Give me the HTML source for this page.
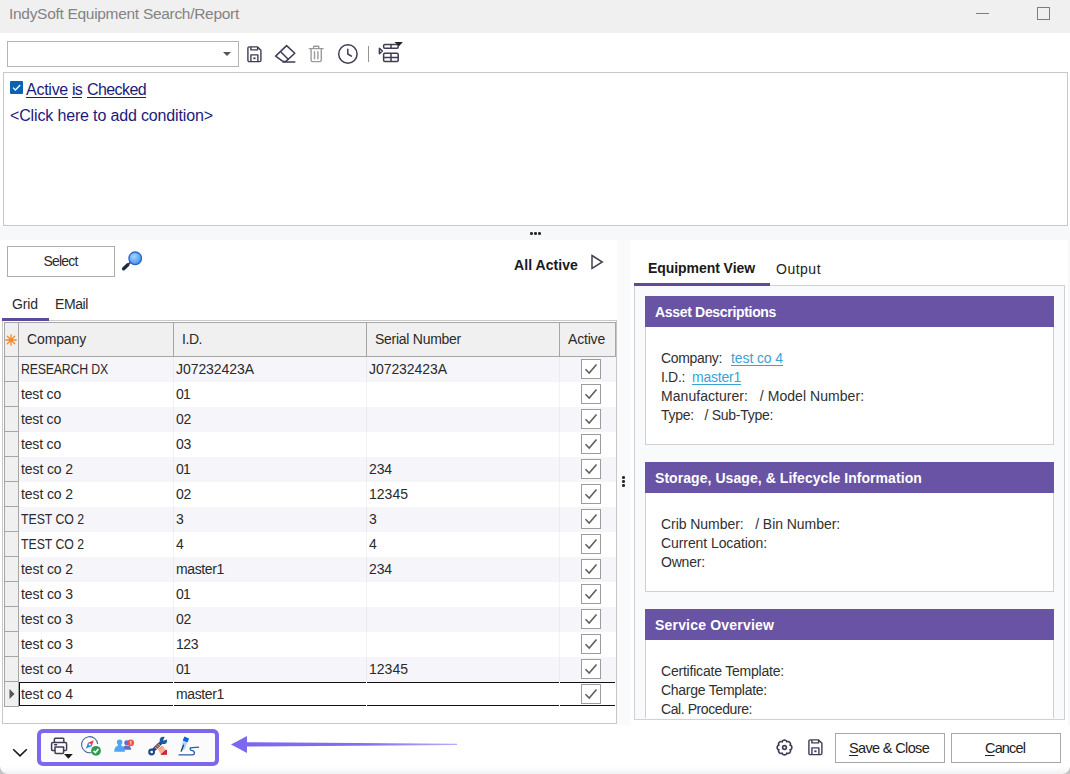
<!DOCTYPE html>
<html>
<head>
<meta charset="utf-8">
<title>IndySoft Equipment Search/Report</title>
<style>
*{box-sizing:border-box;margin:0;padding:0}
html,body{width:1070px;height:774px;overflow:hidden;background:#fff}
body{font-family:"Liberation Sans",sans-serif;font-size:14px;color:#222;position:relative}
.abs{position:absolute}
.t{position:absolute;white-space:pre}
u{text-decoration:underline;text-underline-offset:2px}
svg{position:absolute;overflow:visible}

</style>
</head>
<body>
<div class="abs" style="left:0px;top:0px;width:1070px;height:33px;background:#f0f0f0;"></div>
<div class="t" style="left:9px;top:4px;height:20px;line-height:20px;font-size:15.5px;color:#838383;letter-spacing:-0.30px;">IndySoft Equipment Search/Report</div>
<div class="abs" style="left:976px;top:13.4px;width:13px;height:1px;background:#7d7d7d;"></div>
<div class="abs" style="left:1037px;top:7px;width:13px;height:13px;border:1px solid #7d7d7d;"></div>
<div class="abs" style="left:7px;top:41px;width:232px;height:26px;background:#fff;border:1px solid #b4b4b4;"></div>
<div class="abs" style="left:223px;top:52px;width:0;height:0;border-left:4px solid transparent;border-right:4px solid transparent;border-top:4px solid #555"></div>
<div class="abs" style="left:3px;top:72px;width:1065px;height:154px;background:#fff;border:1px solid #c8c8c8;"></div>
<div class="abs" style="left:0px;top:226px;width:1070px;height:14px;background:#f7f8fa;"></div>
<div class="abs" style="left:617px;top:240px;width:13px;height:485px;background:#f9fafb;"></div>
<div class="abs" style="left:1068px;top:240px;width:2px;height:485px;background:#f7f8fa;"></div>
<div class="abs" style="left:530.2px;top:232.29999999999998px;width:2.6px;height:2.6px;background:#2a2a2a;border-radius:50%;"></div>
<div class="abs" style="left:534.2px;top:232.29999999999998px;width:2.6px;height:2.6px;background:#2a2a2a;border-radius:50%;"></div>
<div class="abs" style="left:538.1px;top:232.29999999999998px;width:2.6px;height:2.6px;background:#2a2a2a;border-radius:50%;"></div>
<div class="abs" style="left:622.1px;top:476.2px;width:2.6px;height:2.6px;background:#2a2a2a;border-radius:50%;"></div>
<div class="abs" style="left:622.1px;top:480.09999999999997px;width:2.6px;height:2.6px;background:#2a2a2a;border-radius:50%;"></div>
<div class="abs" style="left:622.1px;top:484.0px;width:2.6px;height:2.6px;background:#2a2a2a;border-radius:50%;"></div>
<div class="abs" style="left:9.5px;top:81px;width:13px;height:13px;background:#0a62b0;border-radius:1px;"></div>
<svg style="left:9.5px;top:81px" width="13" height="13" viewBox="0 0 13 13"><path d="M3 6.6 L5.4 9 L10.2 4" fill="none" stroke="#fff" stroke-width="1.3"/></svg>
<div class="t" style="left:26px;top:80px;height:20px;line-height:20px;font-size:16px;color:#1b1b78;letter-spacing:-0.26px;text-decoration:underline;text-underline-offset:2px;">Active</div>
<div class="t" style="left:72px;top:80px;height:20px;line-height:20px;font-size:16px;color:#1b1b78;letter-spacing:-0.78px;text-decoration:underline;text-underline-offset:2px;">is</div>
<div class="t" style="left:87px;top:80px;height:20px;line-height:20px;font-size:16px;color:#1b1b78;letter-spacing:-0.59px;text-decoration:underline;text-underline-offset:2px;">Checked</div>
<div class="t" style="left:10px;top:106px;height:20px;line-height:20px;font-size:16px;color:#1b1b78;letter-spacing:-0.15px;">&lt;Click here to add condition&gt;</div>
<div class="abs" style="left:7px;top:246px;width:108px;height:31px;background:#fff;border:1px solid #adadad;"></div>
<div class="t" style="left:43.5px;top:251px;height:20px;line-height:20px;font-size:14px;color:#2a2a2a;letter-spacing:-0.82px;">Select</div>
<div class="t" style="left:514px;top:255px;height:20px;line-height:20px;font-size:14px;color:#1a1a1a;font-weight:bold;letter-spacing:0.07px;">All Active</div>
<svg style="left:590px;top:254px" width="14" height="16" viewBox="0 0 14 16"><path d="M2 1.5 L12.3 8 L2 14.5 Z" fill="none" stroke="#44444f" stroke-width="1.5" stroke-linejoin="miter"/></svg>
<div class="t" style="left:12px;top:294px;height:20px;line-height:20px;font-size:14px;color:#2a2a2a;letter-spacing:-0.11px;">Grid</div>
<div class="t" style="left:55px;top:294px;height:20px;line-height:20px;font-size:14px;color:#2a2a2a;letter-spacing:-0.40px;">EMail</div>
<div class="abs" style="left:2px;top:318px;width:47px;height:3px;background:#5d4a9e;z-index:2;"></div>
<div class="abs" style="left:2px;top:320px;width:615px;height:404px;background:#fff;border:1px solid #c8c8c8;"></div>
<div class="abs" style="left:4px;top:322px;width:612px;height:35px;background:#f0f0f0;border:1px solid #a6a6a6;border-left:none;"></div>
<div class="abs" style="left:18px;top:322px;width:1px;height:35px;background:#a6a6a6;"></div>
<div class="abs" style="left:173px;top:322px;width:1px;height:35px;background:#a6a6a6;"></div>
<div class="abs" style="left:366px;top:322px;width:1px;height:35px;background:#a6a6a6;"></div>
<div class="abs" style="left:559px;top:322px;width:1px;height:35px;background:#a6a6a6;"></div>
<svg style="left:5px;top:334px" width="12" height="12" viewBox="0 0 12 12"><g stroke="#ee8a2a" stroke-width="1.3" stroke-linecap="round"><path d="M6 0.8 V11.2 M0.8 6 H11.2 M2.3 2.3 L9.7 9.7 M9.7 2.3 L2.3 9.7"/></g><circle cx="6" cy="6" r="1.6" fill="#ee8a2a"/></svg>
<div class="t" style="left:27px;top:329px;height:20px;line-height:20px;font-size:14px;color:#2a2a2a;letter-spacing:-0.13px;">Company</div>
<div class="t" style="left:182px;top:329px;height:20px;line-height:20px;font-size:14px;color:#2a2a2a;letter-spacing:-0.44px;">I.D.</div>
<div class="t" style="left:375px;top:329px;height:20px;line-height:20px;font-size:14px;color:#2a2a2a;letter-spacing:-0.27px;">Serial Number</div>
<div class="t" style="left:568px;top:329px;height:20px;line-height:20px;font-size:14px;color:#2a2a2a;letter-spacing:-0.19px;">Active</div>
<div class="abs" style="left:19px;top:357px;width:597px;height:25px;background:#f6f6fa;"></div>
<div class="abs" style="left:4px;top:357px;width:15px;height:25px;background:#f0f0f0;border-right:1px solid #a6a6a6;border-bottom:1px solid #a6a6a6;"></div>
<div class="t" style="left:21px;top:359px;height:20px;line-height:20px;font-size:14px;color:#2a2a2a;letter-spacing:-0.21px;transform:scaleX(0.88);transform-origin:0 50%;">RESEARCH DX</div>
<div class="t" style="left:176px;top:359px;height:20px;line-height:20px;font-size:14px;color:#2a2a2a;letter-spacing:-0.06px;">J07232423A</div>
<div class="t" style="left:369px;top:359px;height:20px;line-height:20px;font-size:14px;color:#2a2a2a;letter-spacing:-0.06px;">J07232423A</div>
<div class="abs" style="left:581px;top:359px;width:20px;height:20px;background:#fff;border:1px solid #9c9c9c;"></div>
<svg style="left:581px;top:359px" width="20" height="20" viewBox="0 0 20 20"><path d="M4.5 10.2 L8.2 14 L15.5 5.5" fill="none" stroke="#606060" stroke-width="1.6"/></svg>
<div class="abs" style="left:4px;top:382px;width:15px;height:25px;background:#f0f0f0;border-right:1px solid #a6a6a6;border-bottom:1px solid #a6a6a6;"></div>
<div class="t" style="left:21px;top:384px;height:20px;line-height:20px;font-size:14px;color:#2a2a2a;letter-spacing:-0.18px;">test co</div>
<div class="t" style="left:176px;top:384px;height:20px;line-height:20px;font-size:14px;color:#2a2a2a;letter-spacing:-0.79px;">01</div>
<div class="abs" style="left:581px;top:384px;width:20px;height:20px;background:#fff;border:1px solid #9c9c9c;"></div>
<svg style="left:581px;top:384px" width="20" height="20" viewBox="0 0 20 20"><path d="M4.5 10.2 L8.2 14 L15.5 5.5" fill="none" stroke="#606060" stroke-width="1.6"/></svg>
<div class="abs" style="left:19px;top:407px;width:597px;height:25px;background:#f6f6fa;"></div>
<div class="abs" style="left:4px;top:407px;width:15px;height:25px;background:#f0f0f0;border-right:1px solid #a6a6a6;border-bottom:1px solid #a6a6a6;"></div>
<div class="t" style="left:21px;top:409px;height:20px;line-height:20px;font-size:14px;color:#2a2a2a;letter-spacing:-0.18px;">test co</div>
<div class="t" style="left:176px;top:409px;height:20px;line-height:20px;font-size:14px;color:#2a2a2a;letter-spacing:-0.29px;">02</div>
<div class="abs" style="left:581px;top:409px;width:20px;height:20px;background:#fff;border:1px solid #9c9c9c;"></div>
<svg style="left:581px;top:409px" width="20" height="20" viewBox="0 0 20 20"><path d="M4.5 10.2 L8.2 14 L15.5 5.5" fill="none" stroke="#606060" stroke-width="1.6"/></svg>
<div class="abs" style="left:4px;top:432px;width:15px;height:25px;background:#f0f0f0;border-right:1px solid #a6a6a6;border-bottom:1px solid #a6a6a6;"></div>
<div class="t" style="left:21px;top:434px;height:20px;line-height:20px;font-size:14px;color:#2a2a2a;letter-spacing:-0.18px;">test co</div>
<div class="t" style="left:176px;top:434px;height:20px;line-height:20px;font-size:14px;color:#2a2a2a;letter-spacing:-0.29px;">03</div>
<div class="abs" style="left:581px;top:434px;width:20px;height:20px;background:#fff;border:1px solid #9c9c9c;"></div>
<svg style="left:581px;top:434px" width="20" height="20" viewBox="0 0 20 20"><path d="M4.5 10.2 L8.2 14 L15.5 5.5" fill="none" stroke="#606060" stroke-width="1.6"/></svg>
<div class="abs" style="left:19px;top:457px;width:597px;height:25px;background:#f6f6fa;"></div>
<div class="abs" style="left:4px;top:457px;width:15px;height:25px;background:#f0f0f0;border-right:1px solid #a6a6a6;border-bottom:1px solid #a6a6a6;"></div>
<div class="t" style="left:21px;top:459px;height:20px;line-height:20px;font-size:14px;color:#2a2a2a;letter-spacing:-0.10px;">test co 2</div>
<div class="t" style="left:176px;top:459px;height:20px;line-height:20px;font-size:14px;color:#2a2a2a;letter-spacing:-0.79px;">01</div>
<div class="t" style="left:369px;top:459px;height:20px;line-height:20px;font-size:14px;color:#2a2a2a;letter-spacing:-0.12px;">234</div>
<div class="abs" style="left:581px;top:459px;width:20px;height:20px;background:#fff;border:1px solid #9c9c9c;"></div>
<svg style="left:581px;top:459px" width="20" height="20" viewBox="0 0 20 20"><path d="M4.5 10.2 L8.2 14 L15.5 5.5" fill="none" stroke="#606060" stroke-width="1.6"/></svg>
<div class="abs" style="left:4px;top:482px;width:15px;height:25px;background:#f0f0f0;border-right:1px solid #a6a6a6;border-bottom:1px solid #a6a6a6;"></div>
<div class="t" style="left:21px;top:484px;height:20px;line-height:20px;font-size:14px;color:#2a2a2a;letter-spacing:-0.10px;">test co 2</div>
<div class="t" style="left:176px;top:484px;height:20px;line-height:20px;font-size:14px;color:#2a2a2a;letter-spacing:-0.29px;">02</div>
<div class="t" style="left:369px;top:484px;height:20px;line-height:20px;font-size:14px;color:#2a2a2a;letter-spacing:0.01px;">12345</div>
<div class="abs" style="left:581px;top:484px;width:20px;height:20px;background:#fff;border:1px solid #9c9c9c;"></div>
<svg style="left:581px;top:484px" width="20" height="20" viewBox="0 0 20 20"><path d="M4.5 10.2 L8.2 14 L15.5 5.5" fill="none" stroke="#606060" stroke-width="1.6"/></svg>
<div class="abs" style="left:19px;top:507px;width:597px;height:25px;background:#f6f6fa;"></div>
<div class="abs" style="left:4px;top:507px;width:15px;height:25px;background:#f0f0f0;border-right:1px solid #a6a6a6;border-bottom:1px solid #a6a6a6;"></div>
<div class="t" style="left:21px;top:509px;height:20px;line-height:20px;font-size:14px;color:#2a2a2a;letter-spacing:-0.06px;transform:scaleX(0.88);transform-origin:0 50%;">TEST CO 2</div>
<div class="t" style="left:176px;top:509px;height:20px;line-height:20px;font-size:14px;color:#2a2a2a;letter-spacing:-0.79px;">3</div>
<div class="t" style="left:369px;top:509px;height:20px;line-height:20px;font-size:14px;color:#2a2a2a;letter-spacing:-0.79px;">3</div>
<div class="abs" style="left:581px;top:509px;width:20px;height:20px;background:#fff;border:1px solid #9c9c9c;"></div>
<svg style="left:581px;top:509px" width="20" height="20" viewBox="0 0 20 20"><path d="M4.5 10.2 L8.2 14 L15.5 5.5" fill="none" stroke="#606060" stroke-width="1.6"/></svg>
<div class="abs" style="left:4px;top:532px;width:15px;height:25px;background:#f0f0f0;border-right:1px solid #a6a6a6;border-bottom:1px solid #a6a6a6;"></div>
<div class="t" style="left:21px;top:534px;height:20px;line-height:20px;font-size:14px;color:#2a2a2a;letter-spacing:-0.06px;transform:scaleX(0.88);transform-origin:0 50%;">TEST CO 2</div>
<div class="t" style="left:176px;top:534px;height:20px;line-height:20px;font-size:14px;color:#2a2a2a;letter-spacing:0.21px;">4</div>
<div class="t" style="left:369px;top:534px;height:20px;line-height:20px;font-size:14px;color:#2a2a2a;letter-spacing:0.21px;">4</div>
<div class="abs" style="left:581px;top:534px;width:20px;height:20px;background:#fff;border:1px solid #9c9c9c;"></div>
<svg style="left:581px;top:534px" width="20" height="20" viewBox="0 0 20 20"><path d="M4.5 10.2 L8.2 14 L15.5 5.5" fill="none" stroke="#606060" stroke-width="1.6"/></svg>
<div class="abs" style="left:19px;top:557px;width:597px;height:25px;background:#f6f6fa;"></div>
<div class="abs" style="left:4px;top:557px;width:15px;height:25px;background:#f0f0f0;border-right:1px solid #a6a6a6;border-bottom:1px solid #a6a6a6;"></div>
<div class="t" style="left:21px;top:559px;height:20px;line-height:20px;font-size:14px;color:#2a2a2a;letter-spacing:-0.10px;">test co 2</div>
<div class="t" style="left:176px;top:559px;height:20px;line-height:20px;font-size:14px;color:#2a2a2a;letter-spacing:-0.37px;">master1</div>
<div class="t" style="left:369px;top:559px;height:20px;line-height:20px;font-size:14px;color:#2a2a2a;letter-spacing:-0.12px;">234</div>
<div class="abs" style="left:581px;top:559px;width:20px;height:20px;background:#fff;border:1px solid #9c9c9c;"></div>
<svg style="left:581px;top:559px" width="20" height="20" viewBox="0 0 20 20"><path d="M4.5 10.2 L8.2 14 L15.5 5.5" fill="none" stroke="#606060" stroke-width="1.6"/></svg>
<div class="abs" style="left:4px;top:582px;width:15px;height:25px;background:#f0f0f0;border-right:1px solid #a6a6a6;border-bottom:1px solid #a6a6a6;"></div>
<div class="t" style="left:21px;top:584px;height:20px;line-height:20px;font-size:14px;color:#2a2a2a;letter-spacing:-0.10px;">test co 3</div>
<div class="t" style="left:176px;top:584px;height:20px;line-height:20px;font-size:14px;color:#2a2a2a;letter-spacing:-0.79px;">01</div>
<div class="abs" style="left:581px;top:584px;width:20px;height:20px;background:#fff;border:1px solid #9c9c9c;"></div>
<svg style="left:581px;top:584px" width="20" height="20" viewBox="0 0 20 20"><path d="M4.5 10.2 L8.2 14 L15.5 5.5" fill="none" stroke="#606060" stroke-width="1.6"/></svg>
<div class="abs" style="left:19px;top:607px;width:597px;height:25px;background:#f6f6fa;"></div>
<div class="abs" style="left:4px;top:607px;width:15px;height:25px;background:#f0f0f0;border-right:1px solid #a6a6a6;border-bottom:1px solid #a6a6a6;"></div>
<div class="t" style="left:21px;top:609px;height:20px;line-height:20px;font-size:14px;color:#2a2a2a;letter-spacing:-0.10px;">test co 3</div>
<div class="t" style="left:176px;top:609px;height:20px;line-height:20px;font-size:14px;color:#2a2a2a;letter-spacing:-0.29px;">02</div>
<div class="abs" style="left:581px;top:609px;width:20px;height:20px;background:#fff;border:1px solid #9c9c9c;"></div>
<svg style="left:581px;top:609px" width="20" height="20" viewBox="0 0 20 20"><path d="M4.5 10.2 L8.2 14 L15.5 5.5" fill="none" stroke="#606060" stroke-width="1.6"/></svg>
<div class="abs" style="left:4px;top:632px;width:15px;height:25px;background:#f0f0f0;border-right:1px solid #a6a6a6;border-bottom:1px solid #a6a6a6;"></div>
<div class="t" style="left:21px;top:634px;height:20px;line-height:20px;font-size:14px;color:#2a2a2a;letter-spacing:-0.10px;">test co 3</div>
<div class="t" style="left:176px;top:634px;height:20px;line-height:20px;font-size:14px;color:#2a2a2a;letter-spacing:-0.45px;">123</div>
<div class="abs" style="left:581px;top:634px;width:20px;height:20px;background:#fff;border:1px solid #9c9c9c;"></div>
<svg style="left:581px;top:634px" width="20" height="20" viewBox="0 0 20 20"><path d="M4.5 10.2 L8.2 14 L15.5 5.5" fill="none" stroke="#606060" stroke-width="1.6"/></svg>
<div class="abs" style="left:19px;top:657px;width:597px;height:25px;background:#f6f6fa;"></div>
<div class="abs" style="left:4px;top:657px;width:15px;height:25px;background:#f0f0f0;border-right:1px solid #a6a6a6;border-bottom:1px solid #a6a6a6;"></div>
<div class="t" style="left:21px;top:659px;height:20px;line-height:20px;font-size:14px;color:#2a2a2a;letter-spacing:-0.10px;">test co 4</div>
<div class="t" style="left:176px;top:659px;height:20px;line-height:20px;font-size:14px;color:#2a2a2a;letter-spacing:-0.79px;">01</div>
<div class="t" style="left:369px;top:659px;height:20px;line-height:20px;font-size:14px;color:#2a2a2a;letter-spacing:0.01px;">12345</div>
<div class="abs" style="left:581px;top:659px;width:20px;height:20px;background:#fff;border:1px solid #9c9c9c;"></div>
<svg style="left:581px;top:659px" width="20" height="20" viewBox="0 0 20 20"><path d="M4.5 10.2 L8.2 14 L15.5 5.5" fill="none" stroke="#606060" stroke-width="1.6"/></svg>
<div class="abs" style="left:4px;top:682px;width:15px;height:25px;background:#f0f0f0;border-right:1px solid #a6a6a6;border-bottom:1px solid #a6a6a6;"></div>
<div class="t" style="left:21px;top:684px;height:20px;line-height:20px;font-size:14px;color:#2a2a2a;letter-spacing:-0.10px;">test co 4</div>
<div class="t" style="left:176px;top:684px;height:20px;line-height:20px;font-size:14px;color:#2a2a2a;letter-spacing:-0.37px;">master1</div>
<div class="abs" style="left:581px;top:684px;width:20px;height:20px;background:#fff;border:1px solid #9c9c9c;"></div>
<svg style="left:581px;top:684px" width="20" height="20" viewBox="0 0 20 20"><path d="M4.5 10.2 L8.2 14 L15.5 5.5" fill="none" stroke="#606060" stroke-width="1.6"/></svg>
<div class="abs" style="left:4px;top:322px;width:1px;height:385px;background:#a6a6a6;"></div>
<div class="abs" style="left:173px;top:357px;width:1px;height:350px;background:rgba(150,150,170,0.12);"></div>
<div class="abs" style="left:366px;top:357px;width:1px;height:350px;background:rgba(150,150,170,0.12);"></div>
<div class="abs" style="left:559px;top:357px;width:1px;height:350px;background:rgba(150,150,170,0.12);"></div>
<div class="abs" style="left:19px;top:682px;width:596px;height:24px;border:1px solid #111;border-right:none;"></div>
<div class="abs" style="left:173px;top:682px;width:1px;height:24px;background:#fff;"></div>
<div class="abs" style="left:366px;top:682px;width:1px;height:24px;background:#fff;"></div>
<div class="abs" style="left:559px;top:682px;width:1px;height:24px;background:#fff;"></div>
<svg style="left:9px;top:688px" width="6" height="12" viewBox="0 0 6 12"><path d="M0.5 1 L5.5 6 L0.5 11 Z" fill="#555"/></svg>
<div class="t" style="left:648px;top:258px;height:20px;line-height:20px;font-size:14px;color:#1a1a1a;font-weight:bold;letter-spacing:-0.06px;">Equipment View</div>
<div class="t" style="left:776px;top:259px;height:20px;line-height:20px;font-size:14px;color:#222;letter-spacing:0.50px;">Output</div>
<div class="abs" style="left:634px;top:285px;width:431px;height:435px;background:#f9fafc;border:1px solid #d2d2d6;"></div>
<div class="abs" style="left:634px;top:283px;width:136px;height:3px;background:#5d4a9e;"></div>
<div class="abs" style="left:645px;top:296px;width:409px;height:149px;background:#fff;border:1px solid #cfcfd4;"></div>
<div class="abs" style="left:645px;top:296.4px;width:409px;height:31px;background:#6853a4;"></div>
<div class="t" style="left:655px;top:302px;height:20px;line-height:20px;font-size:14px;color:#fff;font-weight:bold;letter-spacing:-0.32px;">Asset Descriptions</div>
<div class="abs" style="left:645px;top:462px;width:409px;height:130px;background:#fff;border:1px solid #cfcfd4;"></div>
<div class="abs" style="left:645px;top:462.4px;width:409px;height:31px;background:#6853a4;"></div>
<div class="t" style="left:655px;top:468px;height:20px;line-height:20px;font-size:14px;color:#fff;font-weight:bold;letter-spacing:0.06px;">Storage, Usage, &amp; Lifecycle Information</div>
<div class="abs" style="left:645px;top:609px;width:409px;height:109px;background:#fff;border:1px solid #cfcfd4;border-bottom:none;"></div>
<div class="abs" style="left:645px;top:609.4px;width:409px;height:31px;background:#6853a4;"></div>
<div class="t" style="left:655px;top:615px;height:20px;line-height:20px;font-size:14px;color:#fff;font-weight:bold;letter-spacing:0.19px;">Service Overview</div>
<div class="t" style="left:661px;top:348px;height:20px;line-height:20px;font-size:14px;color:#303030;letter-spacing:-0.35px;">Company:</div>
<div class="t" style="left:731px;top:348px;height:20px;line-height:20px;font-size:14px;color:#3aa3d6;letter-spacing:-0.10px;text-decoration:underline;text-underline-offset:1.5px;text-decoration-thickness:1px;">test co 4</div>
<div class="t" style="left:661px;top:367px;height:20px;line-height:20px;font-size:14px;color:#303030;letter-spacing:-0.33px;">I.D.:</div>
<div class="t" style="left:692px;top:367px;height:20px;line-height:20px;font-size:14px;color:#3aa3d6;letter-spacing:-0.22px;text-decoration:underline;text-underline-offset:1.5px;text-decoration-thickness:1px;">master1</div>
<div class="t" style="left:661px;top:386px;height:20px;line-height:20px;font-size:14px;color:#303030;letter-spacing:0.05px;">Manufacturer:   / Model Number:</div>
<div class="t" style="left:661px;top:405px;height:20px;line-height:20px;font-size:14px;color:#303030;letter-spacing:-0.29px;">Type:   / Sub-Type:</div>
<div class="t" style="left:661px;top:514px;height:20px;line-height:20px;font-size:14px;color:#303030;letter-spacing:-0.05px;">Crib Number:   / Bin Number:</div>
<div class="t" style="left:661px;top:533px;height:20px;line-height:20px;font-size:14px;color:#303030;letter-spacing:-0.08px;">Current Location:</div>
<div class="t" style="left:661px;top:552px;height:20px;line-height:20px;font-size:14px;color:#303030;letter-spacing:-0.19px;">Owner:</div>
<div class="t" style="left:661px;top:661px;height:20px;line-height:20px;font-size:14px;color:#303030;letter-spacing:-0.21px;">Certificate Template:</div>
<div class="t" style="left:661px;top:680px;height:20px;line-height:20px;font-size:14px;color:#303030;letter-spacing:-0.27px;">Charge Template:</div>
<div class="t" style="left:661px;top:699px;height:20px;line-height:20px;font-size:14px;color:#303030;letter-spacing:-0.42px;">Cal. Procedure:</div>
<div class="abs" style="left:630px;top:720px;width:438px;height:5px;background:#fff;"></div>
<div class="abs" style="left:634px;top:719px;width:431px;height:1px;background:#d2d2d6;"></div>
<div class="abs" style="left:37px;top:729px;width:182px;height:37px;background:#fbfbfb;border:4px solid #7b68ee;border-radius:6px;"></div>
<svg style="left:225px;top:730px" width="240" height="30" viewBox="0 0 240 30"><defs><linearGradient id="ag" x1="0" x2="1" y1="0" y2="0"><stop offset="0" stop-color="#7b68ee"/><stop offset="0.6" stop-color="#7b68ee" stop-opacity="0.95"/><stop offset="1" stop-color="#7b68ee" stop-opacity="0.55"/></linearGradient></defs><path d="M6 14.4 L22 6 L22 12.2 L232 13.7 L232 14.9 L22 16.6 L22 23 Z" fill="url(#ag)"/></svg>
<svg style="left:11px;top:745px" width="18" height="13" viewBox="0 0 18 13"><path d="M2.2 4.2 L9 10.8 L15.8 4.2" fill="none" stroke="#1a1a1a" stroke-width="1.6"/></svg>
<div class="abs" style="left:835px;top:733px;width:110px;height:30px;background:#fff;border:1px solid #a8a8a8;"></div>
<div class="t" style="left:849px;top:738px;height:20px;line-height:20px;font-size:14.5px;color:#222;letter-spacing:-0.65px;"><u>S</u>ave &amp; Close</div>
<div class="abs" style="left:951px;top:733px;width:110px;height:30px;background:#fff;border:1px solid #a8a8a8;"></div>
<div class="t" style="left:985px;top:738px;height:20px;line-height:20px;font-size:14.5px;color:#222;letter-spacing:-0.86px;"><u>C</u>ancel</div>
<div class="abs" style="left:0px;top:767px;width:1070px;height:7px;background:linear-gradient(#fff,#f0f1f3);"></div>
<svg style="left:0;top:766px" width="8" height="8" viewBox="0 0 8 8"><path d="M0 0 V8 H8 A8 8 0 0 1 0 0 Z" fill="#c4c4c4"/></svg>
<svg style="left:1062px;top:766px" width="8" height="8" viewBox="0 0 8 8"><path d="M8 0 V8 H0 A8 8 0 0 0 8 0 Z" fill="#c4c4c4"/></svg>
<svg style="left:246.5px;top:45.5px" width="15" height="17" viewBox="0 0 15 17"><g fill="none" stroke="#3f3c56" stroke-width="1.4" stroke-linejoin="round"><path d="M2.2 0.9 H10.6 L13.9 4.2 V14.3 Q13.9 15.6 12.6 15.6 H2.2 Q0.9 15.6 0.9 14.3 V2.2 Q0.9 0.9 2.2 0.9 Z"/><path d="M3.9 1 V3.9 H10.6 V1"/><path d="M3.9 15.5 V8.9 H10.9 V15.5"/></g><rect x="6.3" y="11.4" width="2.2" height="1.8" fill="#3f3c56"/></svg>
<svg style="left:807.5px;top:738.5px" width="15" height="17" viewBox="0 0 15 17"><g fill="none" stroke="#3f3c56" stroke-width="1.4" stroke-linejoin="round"><path d="M2.2 0.9 H10.6 L13.9 4.2 V14.3 Q13.9 15.6 12.6 15.6 H2.2 Q0.9 15.6 0.9 14.3 V2.2 Q0.9 0.9 2.2 0.9 Z"/><path d="M3.9 1 V3.9 H10.6 V1"/><path d="M3.9 15.5 V8.9 H10.9 V15.5"/></g><rect x="6.3" y="11.4" width="2.2" height="1.8" fill="#3f3c56"/></svg>
<svg style="left:274px;top:44px" width="23" height="20" viewBox="0 0 23 20"><g fill="none" stroke="#3f3c56" stroke-width="1.5" stroke-linejoin="round" stroke-linecap="round"><path d="M12.6 1.6 L20.8 9.2 L11.9 17.4 L8.9 17.4 L1.6 12.1 Z"/><path d="M7.2 8.2 L14.2 15.2"/><path d="M9 18 H20.8"/></g></svg>
<svg style="left:308px;top:45px" width="17" height="18" viewBox="0 0 17 18"><g fill="none" stroke="#9b9b9b" stroke-width="1.4" stroke-linecap="round" stroke-linejoin="round"><path d="M1.2 3.6 H15.2"/><path d="M5.6 3.4 V1.8 Q5.6 1.2 6.2 1.2 H10.2 Q10.8 1.2 10.8 1.8 V3.4"/><path d="M3.1 3.8 V15 Q3.1 16.6 4.7 16.6 H11.7 Q13.3 16.6 13.3 15 V3.8"/><path d="M6.5 6.6 V13.8 M9.9 6.6 V13.8"/></g></svg>
<svg style="left:337px;top:43px" width="22" height="22" viewBox="0 0 22 22"><g fill="none" stroke="#3f3c56" stroke-width="1.5" stroke-linecap="round" stroke-linejoin="round"><circle cx="10.9" cy="11" r="9.2"/><path d="M10.8 6.2 V11 L14.4 13.2"/></g></svg>
<div class="abs" style="left:368px;top:46px;width:1px;height:16px;background:#959595;"></div>
<svg style="left:378px;top:41px" width="26" height="22" viewBox="0 0 26 22"><g fill="none" stroke="#3f3c56" stroke-width="1.5" stroke-linejoin="round"><path d="M1.4 7.2 L4.4 10 L1.4 12.8 Z"/><rect x="5.6" y="3.6" width="14.6" height="3.6" rx="1.2"/><path d="M13 3.6 V7.2"/><rect x="5.6" y="12.2" width="14.6" height="8.2" rx="1.2"/><path d="M13 12.2 V20.4 M5.6 16.4 H20.2"/></g><path d="M16.3 1.1 H24.8 L21.3 5 Z" fill="#222"/></svg>
<svg style="left:120px;top:249px" width="26" height="24" viewBox="0 0 26 24"><defs><radialGradient id="mg" cx="0.4" cy="0.35" r="0.7"><stop offset="0" stop-color="#a6d4ff"/><stop offset="1" stop-color="#3f8ef0"/></radialGradient></defs><path d="M7 16.6 L10.4 13.4" stroke="#2a3a5e" stroke-width="1.6" stroke-linecap="round"/><path d="M3.6 19.8 L7.8 15.8" stroke="#1f2a44" stroke-width="3.4" stroke-linecap="round"/><circle cx="15.2" cy="9.3" r="6.3" fill="url(#mg)" stroke="#2a62c9" stroke-width="1.3"/></svg>
<svg style="left:776.4px;top:738.8px" width="17" height="17" viewBox="0 0 17 17"><g fill="none" stroke="#3f3c56" stroke-width="1.6" stroke-linejoin="round"><path d="M8.50 1.15 L8.68 1.16 L8.86 1.17 L9.04 1.20 L9.21 1.24 L9.39 1.29 L9.56 1.36 L9.73 1.43 L9.89 1.52 L10.04 1.62 L10.20 1.73 L10.34 1.86 L10.47 2.00 L10.60 2.15 L10.71 2.33 L10.79 2.55 L10.80 2.96 L11.08 2.67 L11.30 2.58 L11.51 2.53 L11.70 2.51 L11.90 2.50 L12.09 2.52 L12.27 2.54 L12.45 2.58 L12.63 2.64 L12.80 2.70 L12.97 2.78 L13.13 2.86 L13.28 2.96 L13.43 3.06 L13.57 3.18 L13.70 3.30 L13.82 3.43 L13.94 3.57 L14.04 3.72 L14.14 3.87 L14.22 4.03 L14.30 4.20 L14.36 4.37 L14.42 4.55 L14.46 4.73 L14.48 4.91 L14.50 5.10 L14.49 5.30 L14.47 5.49 L14.42 5.70 L14.33 5.92 L14.04 6.20 L14.45 6.21 L14.67 6.29 L14.85 6.40 L15.00 6.53 L15.14 6.66 L15.27 6.80 L15.38 6.96 L15.48 7.11 L15.57 7.27 L15.64 7.44 L15.71 7.61 L15.76 7.79 L15.80 7.96 L15.83 8.14 L15.84 8.32 L15.85 8.50 L15.84 8.68 L15.83 8.86 L15.80 9.04 L15.76 9.21 L15.71 9.39 L15.64 9.56 L15.57 9.73 L15.48 9.89 L15.38 10.04 L15.27 10.20 L15.14 10.34 L15.00 10.47 L14.85 10.60 L14.67 10.71 L14.45 10.79 L14.04 10.80 L14.33 11.08 L14.42 11.30 L14.47 11.51 L14.49 11.70 L14.50 11.90 L14.48 12.09 L14.46 12.27 L14.42 12.45 L14.36 12.63 L14.30 12.80 L14.22 12.97 L14.14 13.13 L14.04 13.28 L13.94 13.43 L13.82 13.57 L13.70 13.70 L13.57 13.82 L13.43 13.94 L13.28 14.04 L13.13 14.14 L12.97 14.22 L12.80 14.30 L12.63 14.36 L12.45 14.42 L12.27 14.46 L12.09 14.48 L11.90 14.50 L11.70 14.49 L11.51 14.47 L11.30 14.42 L11.08 14.33 L10.80 14.04 L10.79 14.45 L10.71 14.67 L10.60 14.85 L10.47 15.00 L10.34 15.14 L10.20 15.27 L10.04 15.38 L9.89 15.48 L9.73 15.57 L9.56 15.64 L9.39 15.71 L9.21 15.76 L9.04 15.80 L8.86 15.83 L8.68 15.84 L8.50 15.85 L8.32 15.84 L8.14 15.83 L7.96 15.80 L7.79 15.76 L7.61 15.71 L7.44 15.64 L7.27 15.57 L7.11 15.48 L6.96 15.38 L6.80 15.27 L6.66 15.14 L6.53 15.00 L6.40 14.85 L6.29 14.67 L6.21 14.45 L6.20 14.04 L5.92 14.33 L5.70 14.42 L5.49 14.47 L5.30 14.49 L5.10 14.50 L4.91 14.48 L4.73 14.46 L4.55 14.42 L4.37 14.36 L4.20 14.30 L4.03 14.22 L3.87 14.14 L3.72 14.04 L3.57 13.94 L3.43 13.82 L3.30 13.70 L3.18 13.57 L3.06 13.43 L2.96 13.28 L2.86 13.13 L2.78 12.97 L2.70 12.80 L2.64 12.63 L2.58 12.45 L2.54 12.27 L2.52 12.09 L2.50 11.90 L2.51 11.70 L2.53 11.51 L2.58 11.30 L2.67 11.08 L2.96 10.80 L2.55 10.79 L2.33 10.71 L2.15 10.60 L2.00 10.47 L1.86 10.34 L1.73 10.20 L1.62 10.04 L1.52 9.89 L1.43 9.73 L1.36 9.56 L1.29 9.39 L1.24 9.21 L1.20 9.04 L1.17 8.86 L1.16 8.68 L1.15 8.50 L1.16 8.32 L1.17 8.14 L1.20 7.96 L1.24 7.79 L1.29 7.61 L1.36 7.44 L1.43 7.27 L1.52 7.11 L1.62 6.96 L1.73 6.80 L1.86 6.66 L2.00 6.53 L2.15 6.40 L2.33 6.29 L2.55 6.21 L2.96 6.20 L2.67 5.92 L2.58 5.70 L2.53 5.49 L2.51 5.30 L2.50 5.10 L2.52 4.91 L2.54 4.73 L2.58 4.55 L2.64 4.37 L2.70 4.20 L2.78 4.03 L2.86 3.87 L2.96 3.72 L3.06 3.57 L3.18 3.43 L3.30 3.30 L3.43 3.18 L3.57 3.06 L3.72 2.96 L3.87 2.86 L4.03 2.78 L4.20 2.70 L4.37 2.64 L4.55 2.58 L4.73 2.54 L4.91 2.52 L5.10 2.50 L5.30 2.51 L5.49 2.53 L5.70 2.58 L5.92 2.67 L6.20 2.96 L6.21 2.55 L6.29 2.33 L6.40 2.15 L6.53 2.00 L6.66 1.86 L6.80 1.73 L6.96 1.62 L7.11 1.52 L7.27 1.43 L7.44 1.36 L7.61 1.29 L7.79 1.24 L7.96 1.20 L8.14 1.17 L8.32 1.16 L8.50 1.15 Z"/><circle cx="8.5" cy="8.5" r="1.9"/></g></svg>
<svg style="left:50px;top:736px" width="24" height="24" viewBox="0 0 24 24"><g fill="none" stroke="#3f3c56" stroke-width="1.5" stroke-linejoin="round" stroke-linecap="round"><path d="M4.4 6.3 V3 Q4.4 2.2 5.2 2.2 H13 Q13.8 2.2 13.8 3 V6.3"/><path d="M4.8 14.6 H3 Q1.6 14.6 1.6 13.2 V7.8 Q1.6 6.4 3 6.4 H15.2 Q16.6 6.4 16.6 7.8 V13.2 Q16.6 14.6 15.2 14.6 H13.6"/><path d="M5 11 H13.6 V16.6 Q13.6 17.6 12.6 17.6 H6 Q5 17.6 5 16.6 Z"/><path d="M4.6 8.8 H6.6"/></g><path d="M14 18 H22.8 L18.4 22.8 Z" fill="#1a1a1a"/></svg>
<svg style="left:79px;top:734px" width="24" height="24" viewBox="0 0 24 24"><path d="M18.65 10 A8.05 8.05 0 1 0 12.6 18.5" fill="none" stroke="#4a5f96" stroke-width="1.1"/><path d="M14.7 6.3 L12.7 12.3 L9 8.8 Z" fill="#e5394f"/><path d="M6.8 14.5 L9 8.8 L12.7 12.3 Z" fill="#2f8ade"/><circle cx="10.8" cy="10.5" r="1.1" fill="#fff"/><circle cx="17" cy="16.8" r="4.9" fill="#2e9b4e"/><path d="M14.6 16.9 L16.4 18.6 L19.4 15" fill="none" stroke="#fff" stroke-width="1.5"/></svg>
<svg style="left:112px;top:738px" width="24" height="16" viewBox="0 0 24 16"><g fill="#5f6cc4"><circle cx="14.8" cy="4.8" r="2.5"/><path d="M10.4 11.8 Q10.6 7.4 14.8 7.4 Q19 7.4 19.2 11.8 Z"/></g><g fill="#4da6f2"><circle cx="7.6" cy="4.2" r="2.7"/><path d="M2.2 13.8 Q2.4 7.2 7.6 7.2 Q12.8 7.2 13 13.8 Z"/><rect x="6" y="5.6" width="3.2" height="2.6"/></g><circle cx="18.7" cy="4.8" r="3.4" fill="#e8524f"/><path d="M18 3.7 L18.9 3 V6.7" fill="none" stroke="#fff" stroke-width="0.8"/></svg>
<svg style="left:147px;top:735px" width="22" height="22" viewBox="0 0 22 22"><path d="M4.6 16.8 L15.6 6.2" stroke="#1d4a86" stroke-width="3.5"/><path d="M7.8 13.7 L12.6 9.1" stroke="#7c4b52" stroke-width="3.5"/><path d="M8.2 11.9 L10.2 14 M9.8 10.4 L11.8 12.5 M11.3 8.9 L13.3 11" stroke="#f3e6e6" stroke-width="0.7"/><circle cx="4.6" cy="17" r="3.4" fill="#1d4a86"/><circle cx="4.7" cy="17" r="1.35" fill="#fff"/><circle cx="16.4" cy="5.4" r="3.7" fill="#1f5a9e"/><path d="M16 5.8 L18.2 0.8 L21.6 4 Z" fill="#fbfbfb"/><path d="M10.6 13.7 L15.8 10.6 L18.4 14.8 L13.6 19.1 Z" fill="#f4b095"/><path d="M12.4 13.4 L15.2 11.8" stroke="#d9826a" stroke-width="0.7"/><path d="M13.6 19.2 L18.6 14.7 L20 15 L20 19.8 L14.4 19.9 Z" fill="#cf2730"/></svg>
<svg style="left:178px;top:735px" width="23" height="22" viewBox="0 0 23 22"><path d="M4.7 5.9 L9.2 7.7 L6.6 14.3 L3.1 15.9 Z" fill="#a9d7fa"/><path d="M6.4 1.4 L11.1 3.5 L9.4 7.5 L4.7 5.4 Z" fill="#0f63d2"/><path d="M5.5 10.2 L3.2 16.2" stroke="#1d3f73" stroke-width="1.3" stroke-linecap="round"/><path d="M1 19.9 H14.4 Q16.6 19.7 16.4 17.6 Q16.2 15.6 13.4 15.3 Q11.8 14.8 12.3 12.9 L20.6 12.2" fill="none" stroke="#2a5fa8" stroke-width="1.3" stroke-linecap="round"/></svg>
</body>
</html>
